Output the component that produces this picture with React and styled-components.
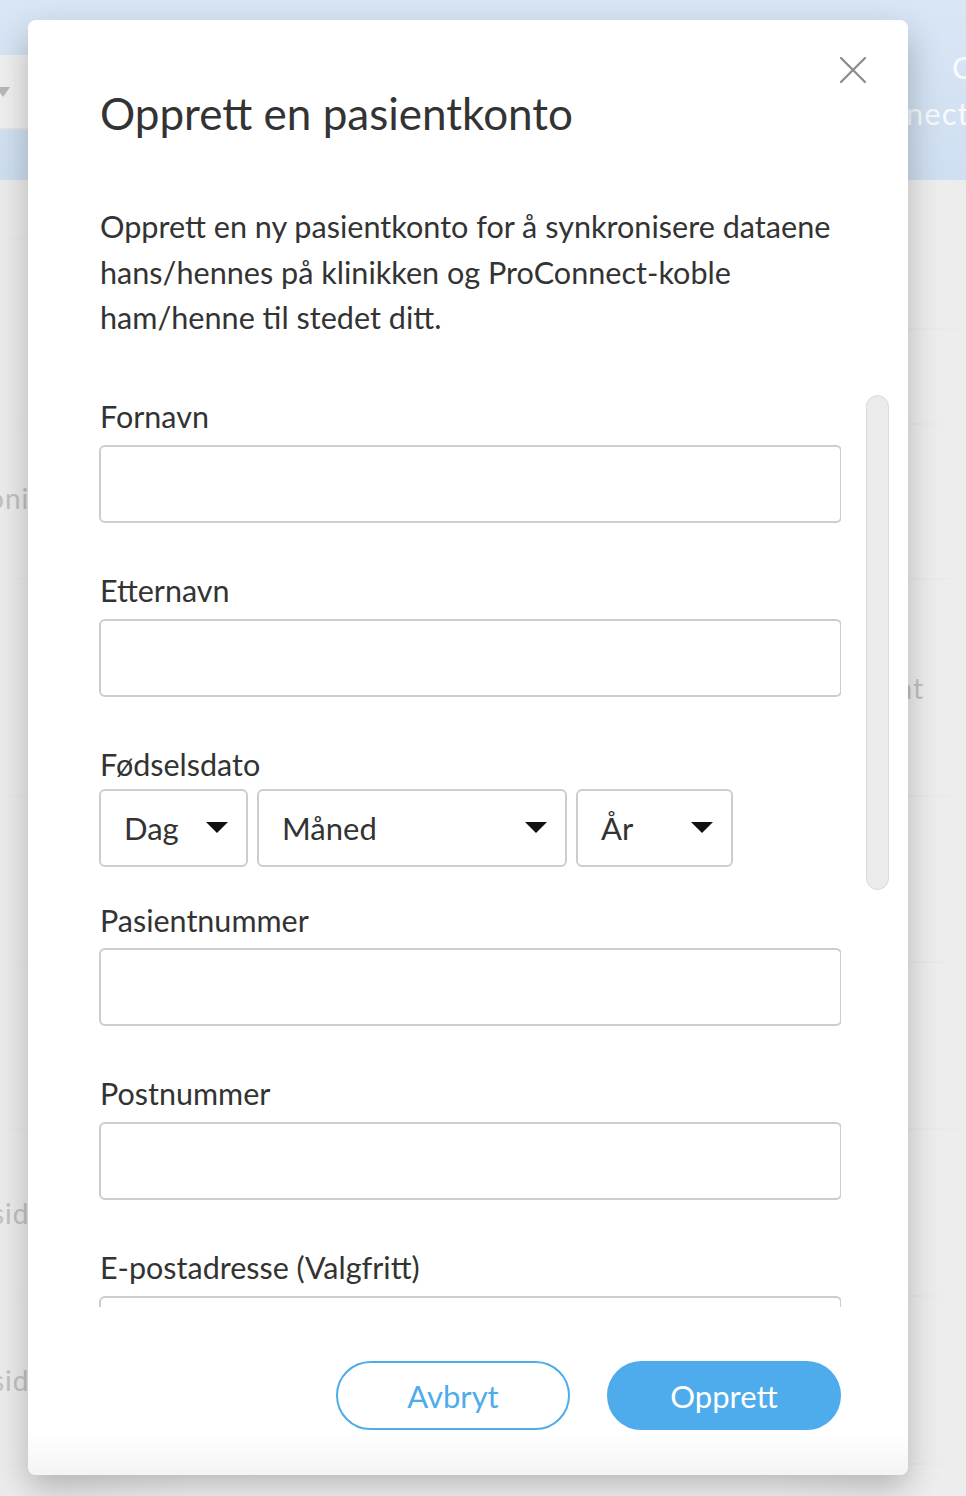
import React from 'react';
import styled, { createGlobalStyle } from 'styled-components';

const GlobalStyle = createGlobalStyle`
  html, body {
    margin: 0;
    padding: 0;
    background: #d2d2d2;
  }
  body {
    font-family: Lato, "Noto Sans", sans-serif;
    color: #333;
  }
  * { box-sizing: border-box; }
`;

const Page = styled.div`
  position: relative;
  width: 966px;
  height: 1496px;
  overflow: hidden;
  background: #f6f6f6;
`;

const Header = styled.div`
  height: 180px;
  background: linear-gradient(180deg, #d9e6f6 0%, #cfdff1 100%);
  display: flex;
  flex-direction: column;
`;

const TopStrip = styled.div`
  height: 55px;
`;

const Toolbar = styled.div`
  height: 75px;
  display: flex;
  justify-content: space-between;
  align-items: flex-start;
`;

const SearchBar = styled.div`
  width: 300px;
  height: 75px;
  background: #f0f0f0;
  border-bottom: 2px solid #e4e4e4;
  display: flex;
  align-items: center;
`;

const SearchArrow = styled.span`
  width: 0;
  height: 0;
  margin-left: -4px;
  border-left: 7px solid transparent;
  border-right: 7px solid transparent;
  border-top: 10px solid #b8b8b8;
`;

const Brand = styled.div`
  width: 60px;
  margin-top: -11px;
  font-size: 31px;
  line-height: 46px;
  color: rgba(255, 255, 255, 0.85);
  white-space: nowrap;
  letter-spacing: 1px;
`;

const BrandLine = styled.div`
  padding-left: ${(p) => p.$pl || 0}px;
`;

const Rows = styled.div`
  display: flex;
  flex-direction: column;
  background: linear-gradient(90deg, #ececec 0%, #f8f8f8 20%, #f8f8f8 80%, #ececec 100%);
`;

const Row = styled.div`
  height: ${(p) => p.$h}px;
  border-bottom: 2px solid #ebebeb;
  display: flex;
  justify-content: space-between;
  align-items: ${(p) => p.$align || 'center'};
  font-size: 28px;
`;

const SplitCell = styled.div`
  width: 60px;
  height: ${(p) => p.$h}px;
  border-bottom: 2px solid #ebebeb;
`;

const Ghost = styled.span`
  margin-left: ${(p) => p.$ml || 0}px;
  margin-right: ${(p) => p.$mr || 0}px;
  margin-top: ${(p) => p.$mt || 0}px;
  letter-spacing: 1px;
  color: #c2c2c2;
`;

const Modal = styled.div`
  position: absolute;
  left: 28px;
  top: 20px;
  width: 880px;
  height: 1455px;
  background: linear-gradient(180deg, #fff 0%, #fff 97%, #f4f4f4 100%);
  border-radius: 8px;
  box-shadow: 0 14px 34px rgba(0, 0, 0, 0.26);
  padding: 68px 67px 45px 71px;
  display: flex;
  flex-direction: column;
`;

const Close = styled.button`
  position: absolute;
  top: 35px;
  right: 40px;
  width: 30px;
  height: 30px;
  padding: 0;
  border: none;
  background: none;
  cursor: pointer;
`;

const Title = styled.h1`
  margin: 0 0 0 1px;
  font-size: 44px;
  line-height: 50px;
  font-weight: 400;
  color: #333;
`;

const Intro = styled.p`
  margin: 66px 0 0 1px;
  font-size: 30.6px;
  line-height: 45.5px;
  color: #333;
`;

const ScrollArea = styled.div`
  margin-top: 40px;
  height: 926px;
  overflow: hidden;
  padding-top: 17px;
`;

const Thumb = styled.div`
  position: absolute;
  left: 838px;
  top: 375px;
  width: 23px;
  height: 495px;
  border-radius: 12px;
  background: #ebebeb;
  border: 1px solid #dadada;
`;

const Field = styled.div`
  display: flex;
  flex-direction: column;
  margin-bottom: ${(p) => p.$mb ?? 49}px;
`;

const Label = styled.label`
  font-size: 30.5px;
  line-height: 36px;
  color: #333;
  margin-left: 1px;
  margin-bottom: ${(p) => p.$mb ?? 11}px;
`;

const Input = styled.input`
  width: 743px;
  height: 78px;
  border: 2px solid #cdcdcd;
  border-radius: 6px;
  padding: 0 20px;
  font-family: inherit;
  font-size: 30px;
  color: #333;
  outline: none;
`;

const SelectRow = styled.div`
  display: flex;
  gap: 9px;
`;

const Select = styled.div`
  width: ${(p) => p.$w}px;
  height: 78px;
  border: 2px solid #cdcdcd;
  border-radius: 6px;
  padding: 0 18px 0 23px;
  display: flex;
  align-items: center;
  justify-content: space-between;
  font-size: 31px;
  color: #333;
`;

const Caret = styled.span`
  width: 0;
  height: 0;
  border-left: 11px solid transparent;
  border-right: 11px solid transparent;
  border-top: 11px solid #111;
`;

const Footer = styled.div`
  margin-top: auto;
  display: flex;
  justify-content: flex-end;
  gap: 37px;
`;

const Button = styled.button`
  width: 234px;
  height: 69px;
  border-radius: 35px;
  border: 2px solid #4eabec;
  background: ${(p) => (p.$primary ? '#4eabec' : '#fff')};
  color: ${(p) => (p.$primary ? '#fff' : '#4eabec')};
  font-family: inherit;
  font-size: 31px;
  cursor: pointer;
`;

const fields = ['Fornavn', 'Etternavn'];
const lower = ['Pasientnummer', 'Postnummer', 'E-postadresse (Valgfritt)'];

export default function App() {
  return (
    <>
      <GlobalStyle />
      <Page>
        <Header>
          <TopStrip />
          <Toolbar>
            <SearchBar>
              <SearchArrow />
            </SearchBar>
            <Brand>
              <BrandLine $pl={46}>C</BrandLine>
              <BrandLine>nect</BrandLine>
            </Brand>
          </Toolbar>
        </Header>
        <Rows>
          <Row $h={245} $align="flex-start">
            <SplitCell $h={60} />
            <SplitCell $h={150} />
          </Row>
          <Row $h={155}>
            <Ghost $ml={-12} $mt={-8}>oni</Ghost>
          </Row>
          <Row $h={217}>
            <span />
            <Ghost $mr={42}>nt</Ghost>
          </Row>
          <Row $h={166} />
          <Row $h={167} />
          <Row $h={167}>
            <Ghost $ml={-8}>sid</Ghost>
          </Row>
          <Row $h={168}>
            <Ghost $ml={-8}>sid</Ghost>
          </Row>
          <Row $h={60} />
        </Rows>

        <Modal>
          <Close aria-label="Lukk">
            <svg width="30" height="30" viewBox="0 0 30 30">
              <path d="M3 3 L27 27 M27 3 L3 27" stroke="#8a8a8a" strokeWidth="2.2" strokeLinecap="round" />
            </svg>
          </Close>
          <Title>Opprett en pasientkonto</Title>
          <Intro>
            Opprett en ny pasientkonto for å synkronisere dataene
            <br />
            hans/hennes på klinikken og ProConnect-koble
            <br />
            ham/henne til stedet ditt.
          </Intro>
          <ScrollArea>
            {fields.map((f) => (
              <Field key={f}>
                <Label>{f}</Label>
                <Input type="text" />
              </Field>
            ))}
            <Field $mb={35}>
              <Label $mb={7}>Fødselsdato</Label>
              <SelectRow>
                <Select $w={149}>Dag<Caret /></Select>
                <Select $w={310}>Måned<Caret /></Select>
                <Select $w={157}>År<Caret /></Select>
              </SelectRow>
            </Field>
            {lower.map((f) => (
              <Field key={f}>
                <Label $mb={f === 'Pasientnummer' ? 10 : 11}>{f}</Label>
                <Input type="text" />
              </Field>
            ))}
          </ScrollArea>
          <Thumb />
          <Footer>
            <Button>Avbryt</Button>
            <Button $primary>Opprett</Button>
          </Footer>
        </Modal>
      </Page>
    </>
  );
}
